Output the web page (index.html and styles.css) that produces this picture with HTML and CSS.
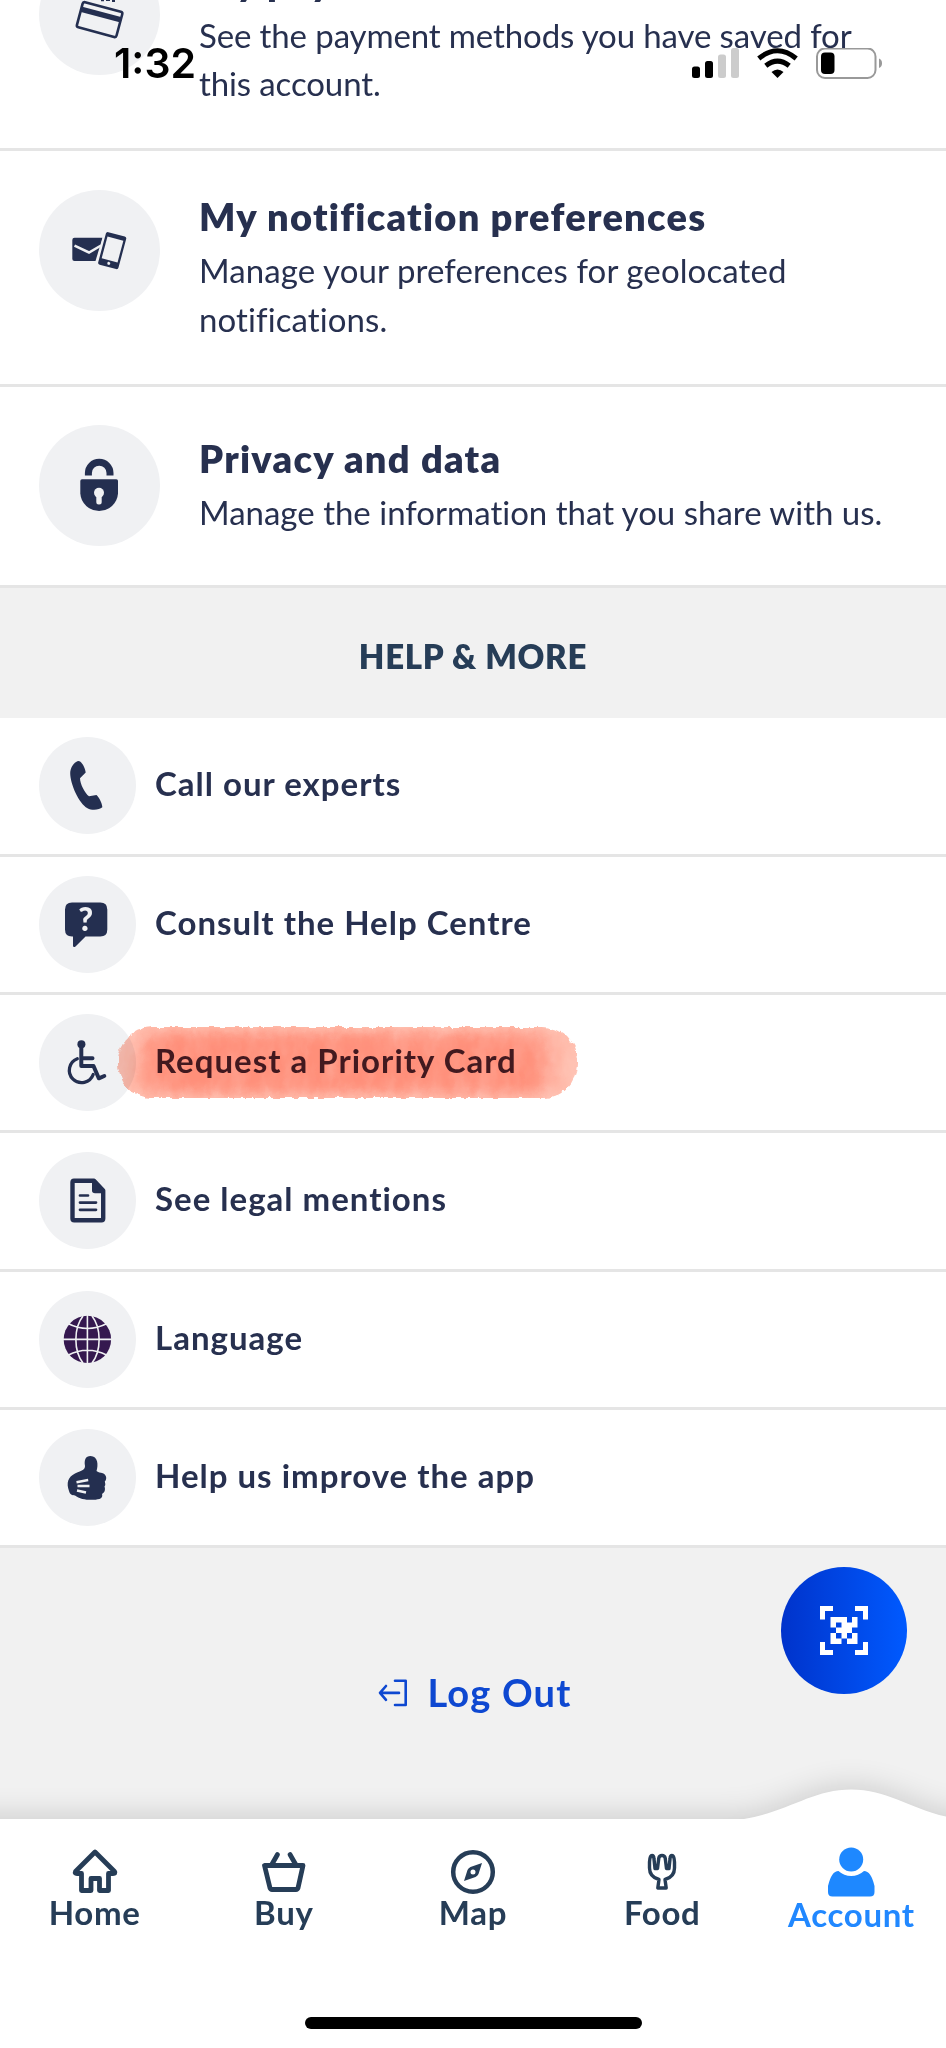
FILE: index.html
```html
<!DOCTYPE html>
<html lang="en">
<head>
<meta charset="utf-8">
<title>Account</title>
<link rel="stylesheet" href="styles.css">
</head>
<body>
<div class="screen">
  <div class="status">
    <span class="clock">1:32</span>
    <svg class="status-icons" width="192" height="32" viewBox="0 0 192 32">
      <g><rect x="0" y="18.500" width="8" height="11.500" rx="2.500"/><rect x="13" y="13" width="8" height="17" rx="2.500"/>
      <rect x="26" y="6.500" width="8" height="23.500" rx="2.500" fill="#ccc"/><rect x="39" y="0" width="8" height="30" rx="2.500" fill="#ccc"/></g>
      <path d="M85.500 30 L79.500 24 Q85.500 19 91.500 24 Z"/>
      <path d="M73.800 17.800 Q85.500 8.500 97.200 17.800" fill="none" stroke="#000" stroke-width="5"/>
      <path d="M66.800 10.500 Q85.500 -5 104.200 10.500" fill="none" stroke="#000" stroke-width="5"/>
      <rect x="125" y="0.500" width="58.500" height="29.500" rx="8" fill="#fff" stroke="#999" stroke-width="2"/>
      <rect x="129" y="4.500" width="13.500" height="21.500" rx="4"/>
      <path d="M187 10.500 Q190 11.500 190 15.300 Q190 19 187 20 Z" fill="#999"/>
    </svg>
  </div>

  <main>
    <section class="settings">
      <article class="setting">
        <div class="disc disc-lg"><svg viewBox="0 0 121 121">
          <path class="fill" d="M62 44h3v3.300h-3zM67 44h4v3h-4zM73 44h3v4h-3z"/>
          <g transform="translate(60.600 65.600) rotate(15)"><rect x="-20.500" y="-13" width="41" height="26" rx="2" class="line" stroke-width="2.600"/><path class="fill" d="M-20-8H20V-2.500H-20Z"/></g>
        </svg></div>
        <div class="copy"><h3>My payment methods</h3><p>See the payment methods you have saved for<br>this account.</p></div>
      </article>
      <article class="setting">
        <div class="disc disc-lg"><svg viewBox="0 0 121 121">
          <path class="fill" d="M35.500 47.700H63.500L56.500 71H35.500Q33.300 71 33.300 69V50Q33.300 47.700 35.500 47.700Z"/>
          <path d="M35.500 55.700 50 62.500 62 55.500" fill="none" stroke="#f0f1f3" stroke-width="2.500"/>
          <g transform="translate(73.200 60.600) rotate(15)"><rect x="-12.500" y="-18.500" width="25" height="37" rx="4" fill="#f0f1f3"/><rect class="fill" x="-10.500" y="-16.800" width="21" height="33.600" rx="2"/><rect x="-8.200" y="-12.500" width="16.400" height="22.500" fill="#f0f1f3"/><circle cy="13.200" r="1.500" fill="#f0f1f3"/></g>
        </svg></div>
        <div class="copy"><h3>My notification preferences</h3><p class="airy">Manage your preferences for geolocated<br>notifications.</p></div>
      </article>
      <article class="setting">
        <div class="disc disc-lg"><svg viewBox="0 0 121 121">
          <path class="line" stroke-width="7" d="M49.400 50.600V48A10.800 10.800 0 0 1 71 48V50.600"/>
          <path class="fill" d="M43 54.300H77.400Q79 54.300 79 56V68.500A18.900 18.900 0 0 1 41.300 68.500V56Q41.300 54.300 43 54.300Z"/>
          <circle cx="60" cy="67.700" r="5" fill="#f0f1f3"/><rect x="57.300" y="68" width="5.400" height="11.600" rx="2.500" fill="#f0f1f3"/>
        </svg></div>
        <div class="copy"><h3>Privacy and data</h3><p>Manage the information that you share with us.</p></div>
      </article>
    </section>

    <h2 class="heading">HELP &amp; MORE</h2>

    <ul class="links">
      <li><div class="disc"><svg viewBox="0 0 97 97"><path class="fill" d="M39.500 24C36 24.500 31.500 29.500 31.200 36 31.200 47 40 66.500 48.500 71.300 53 73.800 60.500 73 63.300 70.300 63.600 67.500 60 60 57.500 58L50 59.300C46 56.500 41 47 41 41.300L46.700 35.500C46.300 31 42.500 24 39.500 24Z"/></svg></div><span>Call our experts</span></li>
      <li><div class="disc"><svg viewBox="0 0 97 97"><path class="fill" d="M33 26.600H61.300Q68.300 26.600 68.300 33.600V53.600Q68.300 60.600 61.300 60.600H46.500L36.500 70.600Q34 72 34 69.500V60.600H33Q26 60.600 26 53.600V33.600Q26 26.600 33 26.600Z"/><text class="query" x="47.300" y="55">?</text></svg></div><span>Consult the Help Centre</span></li>
      <li><div class="disc"><svg viewBox="0 0 97 97"><circle class="fill" cx="42.400" cy="30.200" r="4"/><path class="line round" stroke-width="4" d="M42.300 33V52H54.500L59.800 64.300 65.300 62M43 44.300H53.500"/><path class="line round" stroke-width="3.300" d="M38.300 44.800A12.300 12.300 0 1 0 54.200 60.500"/></svg></div>
        <svg class="brush" width="480" height="92" viewBox="0 0 480 92">
          <defs>
            <filter id="rough" x="-5%" y="-15%" width="110%" height="130%">
              <feTurbulence type="fractalNoise" baseFrequency="0.110" numOctaves="3" seed="4" result="n"/>
              <feDisplacementMap in="SourceGraphic" in2="n" scale="6" xChannelSelector="R" yChannelSelector="G"/>
            </filter>
            <filter id="soft" x="-10%" y="-40%" width="120%" height="180%"><feGaussianBlur stdDeviation="14 7"/></filter>
            <filter id="grain" x="0" y="0" width="100%" height="100%">
              <feTurbulence type="fractalNoise" baseFrequency="0.060 0.025" numOctaves="3" seed="8"/>
              <feColorMatrix values="0 0 0 0 1  0 0 0 0 1  0 0 0 0 1  1.400 0 0 0 -0.450"/>
            </filter>
            <clipPath id="stroke-shape"><rect x="10" y="10" width="459" height="71" rx="34"/></clipPath>
          </defs>
          <g filter="url(#rough)"><g clip-path="url(#stroke-shape)">
            <rect class="wash" x="0" y="0" width="480" height="92"/>
            <rect class="pigment" x="32" y="15" width="410" height="62" rx="14" filter="url(#soft)"/>
            <rect width="480" height="92" filter="url(#grain)" opacity="0.200"/>
          </g></g>
        </svg>
        <span class="marked">Request a Priority Card</span></li>
      <li><div class="disc"><svg viewBox="0 0 97 97"><path class="line" stroke-width="4.400" stroke-linejoin="round" d="M35 28.700H55L64.200 38.500V66.500Q64.200 68.300 62.500 68.300H35.200Q33.500 68.300 33.500 66.500V30.500Q33.500 28.700 35 28.700Z"/><path class="fill" d="M53 28V38.500Q53 41.300 56 41.300H65Z"/><path class="line round" stroke-width="2.700" d="M41 43.500H49M41 50.600H57M41 57.800H57"/></svg></div><span>See legal mentions</span></li>
      <li><div class="disc"><svg viewBox="0 0 97 97"><circle cx="48.400" cy="48.400" r="23.700" fill="#35184f"/><g fill="none" stroke="#f0f1f3" stroke-width="1.600"><path d="M24 48.400H73M48.400 24V73M44 25C34.500 37 34.500 60 44 72M53 25C62.500 37 62.500 60 53 72M29 32.500Q48.400 42.500 68 32.500M29 64.300Q48.400 54.300 68 64.300"/></g></svg></div><span>Language</span></li>
      <li><div class="disc"><svg viewBox="0 0 97 97"><path class="fill" d="M51.500 27C46.500 27 45 31 46 37 46.200 41 42 42 36 44.500 29 48 27 54 30 62 31 66 33 66 36 66.500 42 71.500 54 71.500 60.500 70 63.500 69 63.500 66.500 63 65 66 63.500 66.500 60 65.500 57.500 67 56 66 54 65.800 52.500 68.500 50 67.500 44.500 62 43.800 59.500 43.500 58.500 42.800 57.500 42 59.500 36 59 27 51.500 27Z"/><path d="M37.500 53.200 49.200 51M38.500 57 50.500 57M38 61.500 47 63.500" stroke="#f0f1f3" stroke-width="2.400" fill="none"/></svg></div><span>Help us improve the app</span></li>
    </ul>

    <div class="session">
      <svg class="exit" width="30" height="28" viewBox="0 0 30 28"><path d="M17 1.800H27.700V26H17M2.500 13.900H21M8 7 2 13.900 8 20.800" fill="none" stroke="#0e48d1" stroke-width="2.600" stroke-linejoin="round" stroke-linecap="round"/></svg>
      <span>Log Out</span>
    </div>
  </main>

  <button class="scan" aria-label="Scan">
    <svg width="50" height="50" viewBox="0 0 50 50" fill="#fff">
      <path d="M1 0H14V5H6V13.500H1ZM36 0H49V13.500H44V5H36ZM1 49V36H6V44H14V49ZM49 49H36V44H44V36H49Z"/>
      <path fill-rule="evenodd" d="M11.500 11H28V16.500H33V11H38.500V21.500H33V27H38.500V38H28V32.500H22.500V38H11.500V27H17V21.500H11.500ZM17 16.500V21.500H22.500V16.500ZM17 27V32.500H22.500V27ZM28 27V32.500H33V27Z"/>
    </svg>
  </button>

  <nav class="tabs">
    <svg class="wave" width="946" height="110" viewBox="0 0 946 110">
      <defs><filter id="shade" x="-10%" y="-60%" width="120%" height="220%"><feGaussianBlur stdDeviation="17"/></filter></defs>
      <path d="M-60 80H744C788 73 812 50 851 50S914 73 958 80H1010V180H-60Z" fill="#000" opacity="0.190" filter="url(#shade)"/>
      <path d="M0 79H744C788 72 812 49.500 851 49.500S914 72 958 79V110H0Z" fill="#fff"/>
    </svg>
    <a><svg width="50" height="50" viewBox="0 0 50 50"><path class="ink" stroke-width="4.800" d="M25 5 5.500 24.500Q4.500 26.500 7 26.500H11.500V43.500H21V31.500H29.500V43.500H38.500V26.500H43Q46 26.500 44.500 24.500Z"/></svg><span>Home</span></a>
    <a><svg width="50" height="50" viewBox="0 0 50 50"><path class="ink" stroke-width="4.800" d="M5.500 18.500H44L39 41Q38.500 42.500 37 42.500H13Q11.500 42.500 11 41ZM12.500 18 18.500 7.500M37 18 31 7.500"/></svg><span>Buy</span></a>
    <a><svg width="50" height="50" viewBox="0 0 50 50"><circle class="ink" cx="25" cy="25" r="19.800" stroke-width="4.500"/><path class="ink-fill" fill-rule="evenodd" d="M34 16 30.500 27Q29.500 29 27.500 30L16 34 19.500 23Q20.500 21 22.500 20ZM25 22.500A2.500 2.500 0 1 0 25 27.500 2.500 2.500 0 1 0 25 22.500Z"/></svg><span>Map</span></a>
    <a><svg width="50" height="50" viewBox="0 0 50 50"><path class="ink" stroke-width="3.400" d="M15 8.500Q12.800 8.500 12.500 15V21Q12.500 30 22 32.500L20.800 41H29.200L28 32.500Q37.500 30 37.500 21V15Q37.200 8.500 35 8.500 33.200 8.500 33 12L32 21.500H29.500L28.200 11Q27.500 8.500 25 8.500 22.500 8.500 21.800 11L20.500 21.500H18L17 12Q16.800 8.500 15 8.500Z"/></svg><span>Food</span></a>
    <a class="active"><svg width="50" height="50" viewBox="0 0 50 50"><circle cx="25.200" cy="12.500" r="12"/><path d="M12.500 24Q18 29 25.200 29T38 24Q45 24 48.500 39V45Q48.500 49.500 44 49.500H6.500Q2 49.500 2 45V39Q5.500 24 12.500 24Z"/></svg><span>Account</span></a>
    <div class="home-bar"></div>
  </nav>
</div>
</body>
</html>
```

FILE: styles.css
```css
* { box-sizing: border-box; margin: 0; padding: 0; }
body { font-family: Lato, "Open Sans", sans-serif; font-variant-ligatures: none; color: #27304f; background: #fff; }
.screen { position: relative; width: 946px; height: 2048px; overflow: hidden; display: flex; flex-direction: column; background: #fff; }

.status { position: absolute; z-index: 5; top: 47.500px; left: 114px; right: 62px; display: flex; justify-content: space-between; align-items: flex-start; color: #000; }
.clock { font: 600 41px/30px Inter, sans-serif; letter-spacing: 0; }

main { flex: 1; min-height: 0; }
.settings { margin-top: -84.700px; }
.setting { display: flex; gap: 39px; height: 235.700px; padding: 38.500px 0 0 39px; border-bottom: 3px solid #e5e5e5; background: #fff; }
.setting:last-child { height: 201.500px; }
.disc { flex: none; width: 97px; height: 97px; border-radius: 50%; background: #f0f1f3; }
.disc-lg { width: 121px; height: 121px; }
.disc svg { display: block; width: 100%; height: 100%; }
.fill { fill: #242f50; }
.line { fill: none; stroke: #242f50; }
.round { stroke-linecap: round; stroke-linejoin: round; }
.query { font: 900 32px Lato, sans-serif; fill: #f0f1f3; text-anchor: middle; }
.copy { align-self: center; margin-top: -42px; white-space: nowrap; }
.setting:last-child .copy { margin-top: -44px; }
.copy h3 { font-size: 38px; line-height: 59px; font-weight: 800; letter-spacing: 1.250px; }
.copy p { font-size: 33px; line-height: 48.700px; letter-spacing: 0; }
.copy .airy { letter-spacing: 0.100px; }
.setting:first-child p { letter-spacing: -0.120px; }

.heading { height: 130px; background: #f1f1f1; color: #263d57; text-align: center; font-size: 33px; line-height: 137px; font-weight: 800; letter-spacing: 0.700px; }
.links { list-style: none; }
.links li { position: relative; display: flex; align-items: center; gap: 19px; height: 138.330px; padding-left: 39px; border-bottom: 3px solid #e5e5e5; font-size: 33px; line-height: 40px; font-weight: 700; letter-spacing: 1px; }
.links li > span { position: relative; padding-bottom: 5px; white-space: nowrap; }
.links .marked { color: #42191f; }
.brush { position: absolute; left: 108px; top: 22px; mix-blend-mode: multiply; }
.wash { fill: #ffc0b0; }
.pigment { fill: #ff8f79; }

.session { height: 290px; background: #f1f1f1; display: flex; justify-content: center; gap: 19px; padding: 120px 0 0 4px; color: #0e48d1; font-size: 38px; line-height: 48px; font-weight: 700; letter-spacing: 1.200px; }
.exit { margin-top: 11px; }
.scan { position: absolute; z-index: 2; left: 781px; top: 1567px; width: 126px; height: 127px; border: 0; border-radius: 50%; display: grid; place-items: center; background: linear-gradient(90deg, #0033cb, #005aff); }

.tabs { position: relative; flex: none; height: 229.500px; display: grid; grid-template-columns: repeat(5, 1fr); background: #fff; }
.wave { position: absolute; left: 0; top: -79px; }
.tabs a { position: relative; display: flex; flex-direction: column; align-items: center; padding-top: 28px; color: #263d57; font-size: 33px; line-height: 30px; font-weight: 700; letter-spacing: 0.700px; }
.tabs .active { color: #2188ff; fill: #1e88ff; line-height: 34px; }
.ink { fill: none; stroke: #263d57; stroke-linejoin: round; stroke-linecap: round; }
.ink-fill { fill: #263d57; }
.home-bar { position: absolute; left: 305px; top: 198px; width: 337px; height: 12px; border-radius: 6px; background: #000; }
```
